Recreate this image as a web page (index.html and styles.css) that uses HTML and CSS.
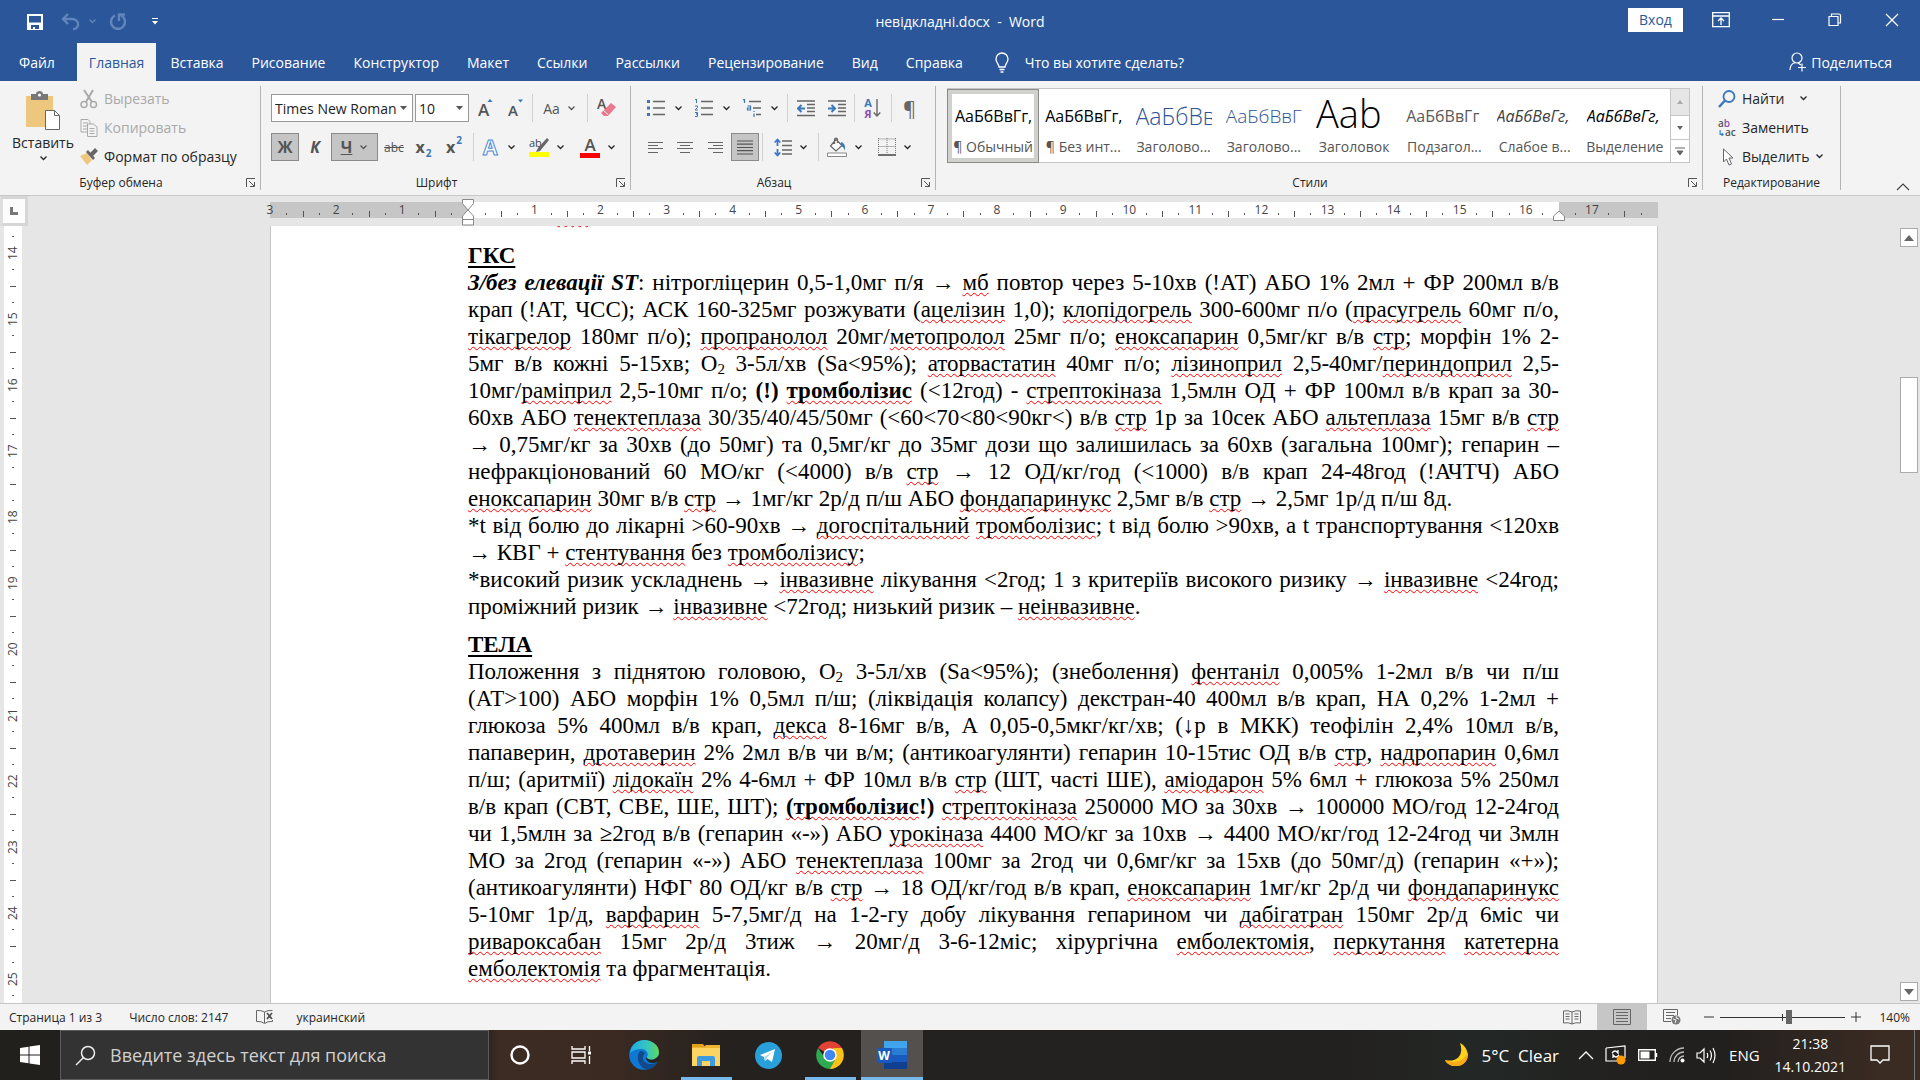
FILE: index.html
```html
<!DOCTYPE html>
<html lang="uk">
<head>
<meta charset="utf-8">
<title>невідкладні.docx - Word</title>
<link rel="stylesheet" href="styles.css">
</head>
<body>
<svg class="defs" aria-hidden="true">
  <symbol id="chev" viewBox="0 0 9 9"><path d="M1.5 2.5l3 3 3-3" fill="none" stroke="currentColor" stroke-width="1.3"/></symbol>
  <symbol id="launch" viewBox="0 0 10 10"><path d="M.5 9V.5H9M3 3l5 5M8.500 4v4.500H4" fill="none" stroke="#555"/></symbol>
</svg>

<header class="titlebar">
  <div class="quick">
    <button aria-label="Сохранить"><svg width="18" height="18" viewBox="0 0 18 18"><path d="M1 1h16v16H1z" fill="#fff"/><path d="M3 3h12v6.500H3zM5 12h8v4H9v-2H7v2H5z" fill="#2b579a"/></svg></button>
    <button class="faded undo" aria-label="Отменить"><svg width="20" height="18" viewBox="0 0 20 18"><path d="M7 1L2 6l5 5M2.500 6H11c8 0 8 10 1 10" fill="none" stroke="currentColor" stroke-width="2.400"/></svg><svg width="9" height="9"><use href="#chev"/></svg></button>
    <button class="faded" aria-label="Повторить"><svg width="18" height="18" viewBox="0 0 18 18"><path d="M6 2.500a7 7 0 1 0 6 0M10 8V1.500h6" fill="none" stroke="currentColor" stroke-width="2.400"/></svg></button>
    <button class="custom" aria-label="Настройка панели"><svg width="8" height="9" viewBox="0 0 8 9"><path d="M1 1.500h6" stroke="#fff"/><path d="M1 4h6L4 7.500z" fill="#fff"/></svg></button>
  </div>
  <div class="doc-title">невідкладні.docx&nbsp; -&nbsp; Word</div>
  <div class="window-btns">
    <button class="signin">Вход</button>
    <button aria-label="Параметры ленты"><svg width="18" height="16" viewBox="0 0 18 16"><path d="M.7.700h16.600v14H.7zM1 4h16M9 13V6.500M6 9l3-3 3 3" fill="none" stroke="#fff" stroke-width="1.300"/></svg></button>
    <button aria-label="Свернуть"><svg width="14" height="14" viewBox="0 0 14 14"><path d="M1 6.500h12" stroke="#fff" stroke-width="1.200"/></svg></button>
    <button aria-label="Развернуть"><svg width="14" height="14" viewBox="0 0 14 14"><path d="M1 3.500h9v9H1zM3.500 3V1H11q1.500 0 1.500 1.500V10H10.500" fill="none" stroke="#fff" stroke-width="1.200"/></svg></button>
    <button aria-label="Закрыть"><svg width="14" height="14" viewBox="0 0 14 14"><path d="M1 1l12 12M13 1L1 13" stroke="#fff" stroke-width="1.200"/></svg></button>
  </div>
</header>

<nav class="tabs">
  <button class="file">Файл</button><button class="active">Главная</button><button>Вставка</button><button>Рисование</button><button>Конструктор</button><button>Макет</button><button>Ссылки</button><button>Рассылки</button><button>Рецензирование</button><button>Вид</button><button>Справка</button>
  <button class="tellme"><svg width="14" height="21" viewBox="0 0 14 21"><path d="M4 15c0-3-3-4-3-8a6 6 0 0 1 12 0c0 4-3 5-3 8zM4.500 17.500h5M5.500 20h3" fill="none" stroke="#fff" stroke-width="1.300"/></svg>Что вы хотите сделать?</button>
  <button class="share"><svg width="18" height="20" viewBox="0 0 18 20"><circle cx="8" cy="6" r="5" fill="none" stroke="#fff" stroke-width="1.200"/><path d="M1 18c0-4 2-6.500 5-7.500M9 11l3 2M9 15.500h8M13 11.500v8" fill="none" stroke="#fff" stroke-width="1.200"/></svg>Поделиться</button>
</nav>

<section class="ribbon" aria-label="Лента">
  <div class="group clipboard">
    <div class="body">
      <button class="paste"><svg width="36" height="40" viewBox="0 0 36 40"><path d="M1 5h27v31H1z" fill="#eec77f"/><path d="M6 3h5c0-4 7-4 7 0h5v6H6z" fill="#777"/><circle cx="14.500" cy="4" r="1.500" fill="#fff"/><path d="M20.500 19.500h9l5 5v14h-14z" fill="#fff" stroke="#666"/><path d="M29.500 19.500v5h5" fill="none" stroke="#666"/></svg>Вставить<svg width="9" height="9"><use href="#chev"/></svg></button>
      <div class="stack">
        <button class="disabled"><svg width="18" height="20" viewBox="0 0 18 20"><path d="M4 1l8 12M13 1L6 13" stroke="#aaa" stroke-width="2"/><circle cx="4" cy="15.500" r="3" fill="none" stroke="#aaa" stroke-width="1.500"/><circle cx="13.500" cy="15.500" r="3" fill="none" stroke="#aaa" stroke-width="1.500"/></svg>Вырезать</button>
        <button class="disabled"><svg width="18" height="20" viewBox="0 0 18 20"><path d="M1 1.500h7l2 2V14H1zM3 5h5M3 8h5M3 11h5" fill="none" stroke="#aaa"/><path d="M7.500 6h6l3.500 3v9.500H7.500z" fill="#f3f3f3" stroke="#aaa"/><path d="M9.500 10.500h5M9.500 13h5M9.500 15.500h5" stroke="#aaa"/></svg>Копировать</button>
        <button><svg width="18" height="18" viewBox="0 0 18 18"><path d="M0 8l7-3 5 7-5 5z" fill="#eec77f"/><path d="M6 4l2-2 7 8-2 2zM10 5l5-5 3 3-5 5z" fill="#666"/></svg>Формат по образцу</button>
      </div>
    </div>
    <footer><span>Буфер обмена</span><button aria-label="Буфер обмена: параметры"><svg width="10" height="10"><use href="#launch"/></svg></button></footer>
  </div>

  <div class="group font">
    <div class="body rows">
      <div class="row font-a">
        <label class="combo"><select aria-label="Шрифт"><option>Times New Roman</option></select><svg width="7" height="4"><path d="M0 0h7L3.500 4z" fill="#555"/></svg></label>
        <label class="combo"><select aria-label="Размер шрифта"><option>10</option></select><svg width="7" height="4"><path d="M0 0h7L3.500 4z" fill="#555"/></svg></label>
        <button aria-label="Увеличить размер"><svg width="16" height="20" viewBox="0 0 16 20"><text class="ga" x="0" y="18" font-size="17">А</text><path d="M9.500 4L12 1l2.500 3z" fill="#3b78b8"/></svg></button>
        <button aria-label="Уменьшить размер"><svg width="16" height="20" viewBox="0 0 16 20"><text class="ga" x="0" y="18" font-size="15">А</text><path d="M10 1.500h5l-2.500 3z" fill="#3b78b8"/></svg></button>
        <i class="sep"></i>
        <button class="grey">Аа<svg width="9" height="9"><use href="#chev"/></svg></button>
        <i class="sep"></i>
        <button aria-label="Очистить формат"><svg width="20" height="20" viewBox="0 0 20 20"><text class="ga" x="0" y="11" font-size="14">А</text><path d="M14 5l5 4-8 9H7l-3-3z" fill="#e8798c"/><path d="M6.500 12.500l5 4.500" stroke="#f3f3f3"/></svg></button>
      </div>
      <div class="row font-b">
        <button class="pressed strong">Ж</button>
        <button class="strong ital">К</button>
        <button class="pressed strong"><u>Ч</u><svg width="9" height="9"><use href="#chev"/></svg></button>
        <button class="strike"><s>abc</s></button>
        <button class="strong">x<sub>2</sub></button>
        <button class="strong">x<sup>2</sup></button>
        <i class="sep"></i>
        <button aria-label="Эффекты"><svg width="20" height="20" viewBox="0 0 20 20"><text class="outline" x="3" y="18" font-size="21">А</text></svg><svg width="9" height="9"><use href="#chev"/></svg></button>
        <button aria-label="Цвет выделения"><span class="hl"><b>ab</b><svg width="20" height="20" viewBox="0 0 20 20"><path d="M18 1l2 2-9 11-4 1 2-4z" fill="#666"/><path d="M0 15h20v5H0z" fill="#ff0"/></svg></span><svg width="9" height="9"><use href="#chev"/></svg></button>
        <button aria-label="Цвет текста"><span class="fc">А</span><svg width="9" height="9"><use href="#chev"/></svg></button>
      </div>
    </div>
    <footer><span>Шрифт</span><button aria-label="Шрифт: параметры"><svg width="10" height="10"><use href="#launch"/></svg></button></footer>
  </div>

  <div class="group para">
    <div class="body rows">
      <div class="row para-a">
        <button aria-label="Маркеры"><svg width="18" height="18" viewBox="0 0 18 18"><path d="M0 1h3v3H0zM0 7.500h3v3H0zM0 14h3v3H0z" fill="#3b78b8"/><path d="M6 2.500h12M6 9h12M6 15.500h12" stroke="#666" stroke-width="1.300"/></svg><svg width="9" height="9"><use href="#chev"/></svg></button>
        <button aria-label="Нумерация"><svg width="18" height="18" viewBox="0 0 18 18"><path d="M0 1l1.500-1v4M0 7h2.500v1.500L0 11h3M0 13.500h2.500V15H1h1.500v2.500H0" fill="none" stroke="#3b78b8"/><path d="M6 2.500h12M6 9h12M6 15.500h12" stroke="#666" stroke-width="1.300"/></svg><svg width="9" height="9"><use href="#chev"/></svg></button>
        <button aria-label="Многоуровневый список"><svg width="18" height="18" viewBox="0 0 18 18"><path d="M0 1l1.500-1v4M4.500 7h3v4h-3V9h3M11 12v1M11 14.500V18" fill="none" stroke="#3b78b8" stroke-width="1.200"/><path d="M6 2.500h12M10 9h8M13 15.500h5" stroke="#666" stroke-width="1.300"/></svg><svg width="9" height="9"><use href="#chev"/></svg></button>
        <i class="sep"></i>
        <button aria-label="Уменьшить отступ"><svg width="18" height="17" viewBox="0 0 18 17"><path d="M0 1h18M10 4.500h8M10 8h8M10 11.500h8M0 15.500h18" stroke="#666" stroke-width="1.300"/><path d="M1 8.500h7M4.500 5L1 8.500 4.500 12" fill="none" stroke="#3b78b8" stroke-width="2"/></svg></button>
        <button aria-label="Увеличить отступ"><svg width="18" height="17" viewBox="0 0 18 17"><path d="M0 1h18M10 4.500h8M10 8h8M10 11.500h8M0 15.500h18" stroke="#666" stroke-width="1.300"/><path d="M0 8.500h7M3.500 5L7 8.500 3.500 12" fill="none" stroke="#3b78b8" stroke-width="2"/></svg></button>
        <i class="sep"></i>
        <button class="sort" aria-label="Сортировка"><span>А<br><em>Я</em></span><svg width="8" height="19" viewBox="0 0 8 19"><path d="M4 0v17M.7 13.500L4 17l3.300-3.500" fill="none" stroke="#666" stroke-width="1.400"/></svg></button>
        <i class="sep"></i>
        <button class="pil">¶</button>
      </div>
      <div class="row para-b">
        <button aria-label="По левому краю"><svg width="15" height="13" viewBox="0 0 15 13"><path d="M0 1.500h15M0 4.500h10M0 7.500h15M0 11.500h10" stroke="#666" stroke-width="1.200"/></svg></button>
        <button aria-label="По центру"><svg width="16" height="13" viewBox="0 0 16 13"><path d="M0 1.500h16M3 4.500h10M0 7.500h16M3 11.500h10" stroke="#666" stroke-width="1.200"/></svg></button>
        <button aria-label="По правому краю"><svg width="15" height="13" viewBox="0 0 15 13"><path d="M0 1.500h15M5 4.500h10M0 7.500h15M5 11.500h10" stroke="#666" stroke-width="1.200"/></svg></button>
        <button class="pressed" aria-label="По ширине"><svg width="16" height="15" viewBox="0 0 16 15"><path d="M0 1h16M0 4.200h16M0 7.500h16M0 10.700h16M0 14h16" stroke="#555" stroke-width="1.200"/></svg></button>
        <i class="sep"></i>
        <button aria-label="Интервал"><svg width="18" height="19" viewBox="0 0 18 19"><path d="M3.500 2v6M3.500 11v6M.7 4.500l2.800-3 2.800 3M.7 14.500l2.800 3 2.800-3" fill="none" stroke="#3b78c8" stroke-width="1.800"/><path d="M8 3h10M8 7.500h10M8 12h10M8 16h10" stroke="#666" stroke-width="1.300"/></svg><svg width="9" height="9"><use href="#chev"/></svg></button>
        <i class="sep"></i>
        <button aria-label="Заливка"><svg width="20" height="20" viewBox="0 0 20 20"><path d="M9 2.500L3.500 9 9 14l6-5.500zM7.500 7V2q1.500-2 3 0v4" fill="#fff" stroke="#666" stroke-width="1.200"/><path d="M14 5q5 1 4 9-1-4-4-5z" fill="#3b78b8"/><path d="M.5 16h19v3.500H.5z" fill="#fff" stroke="#888"/></svg><svg width="9" height="9"><use href="#chev"/></svg></button>
        <button aria-label="Границы"><svg width="18" height="18" viewBox="0 0 18 18"><path d="M.5 1h17M.5 0v16M17.500 0v16M9 0v16M.5 8.500h17" fill="none" stroke="#777" stroke-dasharray="1 1"/><path d="M0 17h18" stroke="#444" stroke-width="1.500"/></svg><svg width="9" height="9"><use href="#chev"/></svg></button>
      </div>
    </div>
    <footer><span>Абзац</span><button aria-label="Абзац: параметры"><svg width="10" height="10"><use href="#launch"/></svg></button></footer>
  </div>

  <div class="group styles">
    <div class="body">
      <div class="gallery">
        <button class="selected"><span>АаБбВвГг,</span><small>¶ Обычный</small></button>
        <button><span>АаБбВвГг,</span><small>¶ Без инт...</small></button>
        <button><span class="h1">АаБбВвГ</span><small>Заголово...</small></button>
        <button><span class="h2">АаБбВвГг</span><small>Заголово...</small></button>
        <button><span class="ttl">Ааb</span><small>Заголовок</small></button>
        <button><span class="subt">АаБбВвГг</span><small>Подзагол...</small></button>
        <button><span class="weak">АаБбВвГг,</span><small>Слабое в...</small></button>
        <button><span class="emph">АаБбВвГг,</span><small>Выделение</small></button>
        <div class="spin">
          <button aria-label="Вверх" disabled><svg width="6" height="4"><path d="M0 4h6L3 0z" fill="#aaa"/></svg></button>
          <button aria-label="Вниз"><svg width="6" height="4"><path d="M0 0h6L3 4z" fill="#666"/></svg></button>
          <button aria-label="Все стили"><svg width="10" height="9"><path d="M0 1h10M2 4h6L5 8z" fill="#666" stroke="#666" stroke-width="1"/></svg></button>
        </div>
      </div>
    </div>
    <footer><span>Стили</span><button aria-label="Стили: параметры"><svg width="10" height="10"><use href="#launch"/></svg></button></footer>
  </div>

  <div class="group edit">
    <div class="body">
      <div class="stack">
        <button><svg width="18" height="18" viewBox="0 0 18 18"><circle cx="11" cy="6.500" r="5.500" fill="none" stroke="#3b78b8" stroke-width="1.800"/><path d="M7 10.500L1 17" stroke="#3b78b8" stroke-width="2.500"/></svg>Найти<svg class="far" width="9" height="9"><use href="#chev"/></svg></button>
        <button><span class="abac"><b>a<em>b</em></b><b><i>↳</i>ac</b></span>Заменить</button>
        <button><svg width="18" height="18" viewBox="0 0 18 18"><path d="M5.500 1v13l3-3 2.500 6 2.500-1-2.500-6h4z" fill="#fff" stroke="#666"/></svg>Выделить<svg class="near" width="9" height="9"><use href="#chev"/></svg></button>
      </div>
    </div>
    <footer><span>Редактирование</span></footer>
  </div>
  <button class="collapse" aria-label="Свернуть ленту"><svg width="14" height="8" viewBox="0 0 14 8"><path d="M1 7l6-6 6 6" fill="none" stroke="#444" stroke-width="1.200"/></svg></button>
</section>

<main class="work">
  <div class="corner"><span></span></div>
  <div class="hruler-row">
    <div class="hruler">
      <div><b>3</b></div><div><b>2</b></div><div><b>1</b></div><div><b><svg width="12" height="27" viewBox="0 0 12 27"><path d="M.5.500h11v4L6 11l5.500 6v9H.5v-9L6 11 .5 4.500zM.5 20.500h11" fill="#fff" stroke="#888"/></svg></b></div><div><b>1</b></div><div><b>2</b></div><div><b>3</b></div><div><b>4</b></div><div><b>5</b></div><div><b>6</b></div><div><b>7</b></div><div><b>8</b></div><div><b>9</b></div><div><b>10</b></div><div><b>11</b></div><div><b>12</b></div><div><b>13</b></div><div><b>14</b></div><div><b>15</b></div><div class="indent-end"><b>16</b><svg width="12" height="11" viewBox="0 0 12 11"><path d="M6 1l5.500 5v4.500H.5V6z" fill="#fff" stroke="#888"/></svg></div><div><b>17</b></div>
    </div>
  </div>
  <div class="vruler"><div class="vcells">
    <div></div><div><b>14</b></div><div><b>15</b></div><div><b>16</b></div><div><b>17</b></div><div><b>18</b></div><div><b>19</b></div><div><b>20</b></div><div><b>21</b></div><div><b>22</b></div><div><b>23</b></div><div><b>24</b></div><div><b>25</b></div>
  </div></div>
  <div class="canvas">
    <article class="page">
      <div class="prev"><u>стр</u><span>,</span><span>,</span><span>р</span><span>р</span></div>
      <h2>ГКС</h2>
      <p>
        <span><b><i>З/без елевації ST</i></b>: нітрогліцерин 0,5-1,0мг п/я → <u>мб</u> повтор через 5-10хв (!АТ) АБО 1% 2мл + ФР 200мл в/в</span>
        <span>крап (!АТ, ЧСС); АСК 160-325мг розжувати (<u>ацелізин</u> 1,0); <u>клопідогрель</u> 300-600мг п/о (<u>прасугрель</u> 60мг п/о,</span>
        <span><u>тікагрелор</u> 180мг п/о); <u>пропранолол</u> 20мг/<u>метопролол</u> 25мг п/о; <u>еноксапарин</u> 0,5мг/кг в/в <u>стр</u>; морфін 1% 2-</span>
        <span>5мг в/в кожні 5-15хв; О<sub>2</sub> 3-5л/хв (Sa&lt;95%); <u>аторвастатин</u> 40мг п/о; <u>лізиноприл</u> 2,5-40мг/<u>периндоприл</u> 2,5-</span>
        <span>10мг/<u>раміприл</u> 2,5-10мг п/о; <b>(!) <u>тромболізис</u></b> (&lt;12год) - <u>стрептокіназа</u> 1,5млн ОД + ФР 100мл в/в крап за 30-</span>
        <span>60хв АБО <u>тенектеплаза</u> 30/35/40/45/50мг (&lt;60&lt;70&lt;80&lt;90кг&lt;) в/в <u>стр</u> 1р за 10сек АБО <u>альтеплаза</u> 15мг в/в <u>стр</u></span>
        <span>→ 0,75мг/кг за 30хв (до 50мг) та 0,5мг/кг до 35мг дози що залишилась за 60хв (загальна 100мг); гепарин –</span>
        <span>нефракціонований 60 МО/кг (&lt;4000) в/в <u>стр</u> → 12 ОД/кг/год (&lt;1000) в/в крап 24-48год (!АЧТЧ) АБО</span>
        <span class="end"><u>еноксапарин</u> 30мг в/в <u>стр</u> → 1мг/кг 2р/д п/ш АБО <u>фондапаринукс</u> 2,5мг в/в <u>стр</u> → 2,5мг 1р/д п/ш 8д.</span>
      </p>
      <p>
        <span>*t від болю до лікарні &gt;60-90хв → <u>догоспітальний</u> <u>тромболізис</u>; t від болю &gt;90хв, а t транспортування &lt;120хв</span>
        <span class="end">→ КВГ + <u>стентування</u> без <u>тромболізису</u>;</span>
      </p>
      <p>
        <span>*високий ризик ускладнень → <u>інвазивне</u> лікування &lt;2год; 1 з критеріїв високого ризику → <u>інвазивне</u> &lt;24год;</span>
        <span class="end">проміжний ризик → <u>інвазивне</u> &lt;72год; низький ризик – <u>неінвазивне</u>.</span>
      </p>
      <h2>ТЕЛА</h2>
      <p>
        <span>Положення з піднятою головою, О<sub>2</sub> 3-5л/хв (Sa&lt;95%); (знеболення) <u>фентаніл</u> 0,005% 1-2мл в/в чи п/ш</span>
        <span>(АТ&gt;100) АБО морфін 1% 0,5мл п/ш; (ліквідація колапсу) декстран-40 400мл в/в крап, НА 0,2% 1-2мл +</span>
        <span>глюкоза 5% 400мл в/в крап, <u>декса</u> 8-16мг в/в, А 0,05-0,5мкг/кг/хв; (↓р в МКК) теофілін 2,4% 10мл в/в,</span>
        <span>папаверин, <u>дротаверин</u> 2% 2мл в/в чи в/м; (антикоагулянти) гепарин 10-15тис ОД в/в <u>стр</u>, <u>надропарин</u> 0,6мл</span>
        <span>п/ш; (аритмії) <u>лідокаїн</u> 2% 4-6мл + ФР 10мл в/в <u>стр</u> (ШТ, часті ШЕ), <u>аміодарон</u> 5% 6мл + глюкоза 5% 250мл</span>
        <span>в/в крап (СВТ, СВЕ, ШЕ, ШТ); <b><u>(тромболізис</u>!)</b> <u>стрептокіназа</u> 250000 МО за 30хв → 100000 МО/год 12-24год</span>
        <span>чи 1,5млн за ≥2год в/в (гепарин «-») АБО <u>урокіназа</u> 4400 МО/кг за 10хв → 4400 МО/кг/год 12-24год чи 3млн</span>
        <span>МО за 2год (гепарин «-») АБО <u>тенектеплаза</u> 100мг за 2год чи 0,6мг/кг за 15хв (до 50мг/д) (гепарин «+»);</span>
        <span>(антикоагулянти) НФГ 80 ОД/кг в/в <u>стр</u> → 18 ОД/кг/год в/в крап, <u>еноксапарин</u> 1мг/кг 2р/д чи <u>фондапаринукс</u></span>
        <span>5-10мг 1р/д, <u>варфарин</u> 5-7,5мг/д на 1-2-гу добу лікування гепарином чи <u>дабігатран</u> 150мг 2р/д 6міс чи</span>
        <span><u>ривароксабан</u> 15мг 2р/д 3тиж → 20мг/д 3-6-12міс; хірургічна <u>емболектомія</u>, <u>перкутання</u> <u>катетерна</u></span>
        <span class="end"><u>емболектомія</u> та фрагментація.</span>
      </p>
    </article>
  </div>
  <div class="scroll">
    <button aria-label="Прокрутить вверх"><svg width="10" height="6"><path d="M0 6h10L5 0z" fill="#666"/></svg></button>
    <div class="track"><div class="thumb"></div></div>
    <button aria-label="Прокрутить вниз"><svg width="10" height="6"><path d="M0 0h10L5 6z" fill="#666"/></svg></button>
  </div>
</main>

<footer class="status">
  <span class="pages">Страница 1 из 3</span><span class="words">Число слов: 2147</span>
  <svg class="proof" width="18" height="16" viewBox="0 0 18 16"><path d="M8.500 14V3Q5 1 .5 1.500v11q5-.5 8 2 3-2.500 8-2V11M8.500 3q3-2 8-1.500" fill="none" stroke="#666"/><path d="M11 4l5 6M16 4l-5 6" stroke="#555" stroke-width="1.800"/></svg>
  <span>украинский</span>
  <div class="views">
    <button aria-label="Режим чтения"><svg width="18" height="15" viewBox="0 0 18 15"><path d="M9 14V2Q5 0 .5 1v12q5-1 8.500 1 3.500-2 8.500-1V1Q13 0 9 2M2.500 4h4M2.500 6.500h4M2.500 9h4M11.500 4h4M11.500 6.500h4M11.500 9h4" fill="none" stroke="#666"/></svg></button>
    <button class="on" aria-label="Разметка страницы"><svg width="18" height="16" viewBox="0 0 18 16"><path d="M.5.500h17v15H.5zM3 3.500h12M3 6.500h12M3 9.500h12M3 12.500h12" fill="none" stroke="#666"/></svg></button>
    <button aria-label="Веб-документ"><svg width="18" height="16" viewBox="0 0 18 16"><path d="M8 12.500H.5V.5h14v6M3 3.500h9M3 6.500h8M3 9.500h5" fill="none" stroke="#666"/><circle cx="13" cy="11" r="4.500" fill="#777"/><path d="M10 10l3 1-1 3M14 7l-1 2 3 1" stroke="#f3f3f3" fill="none"/></svg></button>
  </div>
  <div class="zoom">
    <button aria-label="Уменьшить"><svg width="10" height="10"><path d="M0 5h10" stroke="#333"/></svg></button>
    <input type="range" min="10" max="272" value="156" aria-label="Масштаб">
    <button aria-label="Увеличить"><svg width="10" height="10"><path d="M0 5h10M5 0v10" stroke="#333"/></svg></button>
    <button class="pct">140%</button>
  </div>
</footer>

<div class="taskbar">
  <button class="start" aria-label="Пуск"><svg width="20" height="20" viewBox="0 0 20 20"><path d="M0 3l8.500-1.300v7.800H0zM9.500 1.500L20 0v9.500H9.500zM0 10.500h8.500v7.800L0 17zM9.500 10.500H20V20L9.500 18.500z" fill="#fff"/></svg></button>
  <label class="search"><svg width="21" height="21" viewBox="0 0 21 21"><circle cx="13" cy="8" r="6.500" fill="none" stroke="#eee" stroke-width="1.500"/><path d="M8.500 12.500L1 20" stroke="#eee" stroke-width="1.500"/></svg><input type="text" placeholder="Введите здесь текст для поиска" aria-label="Поиск"></label>
  <div class="apps">
    <button aria-label="Кортана"><svg width="20" height="20"><circle cx="10" cy="10" r="8.500" fill="none" stroke="#fff" stroke-width="2.400"/></svg></button>
    <button aria-label="Представление задач"><svg width="22" height="20" viewBox="0 0 22 20"><path d="M1 1v3h13V1M1 19v-3h13v3M1 7h13v6H1zM18.500 1v5M18.500 11v8" fill="none" stroke="#fff" stroke-width="1.300"/><path d="M17 6.500h3v3h-3z" fill="#fff"/></svg></button>
    <button aria-label="Edge"><svg width="30" height="30" viewBox="0 0 30 30"><defs><linearGradient id="eg"><stop offset="0" stop-color="#1fa9e6"/><stop offset=".6" stop-color="#36c6c0"/><stop offset="1" stop-color="#62d957"/></linearGradient></defs><circle cx="15" cy="15" r="14.800" fill="#0e78d4"/><path d="M1 13C2 5 8 0 15 0c9 0 15 6 15 12 0 6-5 8-9 8-3 0-4-2-3-3 2-3 0-8-6-8-5 0-9 2-11 4z" fill="url(#eg)"/><path d="M11 11c-5 6-1 17 7 18.500C24 29 28 25 28.500 22c-4 3-13 3-14.500-3-.5-3 1-5 2-5.500-1-2-3-2.500-5-2.500z" fill="#114a8b"/><path d="M17 17c0 5 5 7.500 11 5l2-3v-4c-3 5-9 6-12 3z" fill="#25221f"/></svg></button>
    <button class="open" aria-label="Проводник"><svg width="28" height="24" viewBox="0 0 28 24"><path d="M0 1h11l3 4H0z" fill="#e0a21a"/><path d="M0 4h28v19H0z" fill="#fbd461"/><path d="M0 4h12l2-2h14v3H0z" fill="#efb52e"/><path d="M5 23v-8q0-2 2-2h14q2 0 2 2v8h-5v-5h-8v5z" fill="#3e9be0"/></svg></button>
    <button aria-label="Telegram"><svg width="27" height="27" viewBox="0 0 27 27"><circle cx="13.500" cy="13.500" r="13.500" fill="#29a0da"/><path d="M5 13l15-6-3 13-4.500-3-2.500 2-1-4z" fill="#fff"/><path d="M9 15l8-5-5.500 6.500L10 19z" fill="#b5d8ee"/></svg></button>
    <button class="open" aria-label="Chrome"><svg width="28" height="28" viewBox="0 0 28 28"><path d="M14 14L2 7A14 14 0 0 1 26 7z" fill="#e34133"/><path d="M14 14h13A14 14 0 0 1 14 28l-1-1z" fill="#fbc116"/><path d="M26 7a14 14 0 0 1-12 21l6-12-3-9z" fill="#fbc116"/><path d="M2 7a14 14 0 0 0 12 21l5-9-10-2z" fill="#2da94f"/><circle cx="14" cy="14" r="6.800" fill="#fff"/><circle cx="14" cy="14" r="5.300" fill="#4285f4"/></svg></button>
    <button class="open current" aria-label="Word"><svg width="30" height="28" viewBox="0 0 30 28"><path d="M7 0h23v7H7z" fill="#41a5ee"/><path d="M7 7h23v7H7z" fill="#2b7cd3"/><path d="M7 14h23v7H7z" fill="#185abd"/><path d="M7 21h23v7H7z" fill="#103f91"/><path d="M0 7h15v15H0z" fill="#185abd"/><text class="wlogo" x="7" y="19" font-size="12" text-anchor="middle">W</text></svg></button>
  </div>
  <div class="tray">
    <button class="weather"><svg width="24" height="24" viewBox="0 0 24 24"><path d="M15 0c12 6 9 23-4 23-5 0-9-2-11-6 13 3 19-6 15-17z" fill="#ffd21a"/><path d="M23 9c1 8-4 14-12 14-5 0-9-2-11-6 9 4 19 2 23-8z" fill="#fca91a"/></svg>5°C&nbsp; Clear</button>
    <button aria-label="Скрытые значки"><svg width="16" height="9" viewBox="0 0 16 9"><path d="M1 8l7-7 7 7" fill="none" stroke="#fff" stroke-width="1.300"/></svg></button>
    <button aria-label="Обновления"><svg width="22" height="20" viewBox="0 0 22 20"><path d="M1 3l19-2v12M1 3v13h12" fill="none" stroke="#fff" stroke-width="1.200"/><path d="M7 8q3-4 6 0V5M14 10q-3 4-6 0v3" fill="none" stroke="#fff" stroke-width="1.300"/><circle cx="16" cy="15" r="4.500" fill="#ff9a00"/></svg></button>
    <button aria-label="Батарея"><svg width="20" height="12" viewBox="0 0 20 12"><path d="M.7.700h16.600v10.600H.7zM18.500 4v4" fill="none" stroke="#fff" stroke-width="1.400"/><path d="M2.500 2.500h9v7h-9z" fill="#fff"/></svg></button>
    <button aria-label="Сеть"><svg width="16" height="16" viewBox="0 0 16 16"><path d="M1 15A14 14 0 0 1 15 1M5 15A10 10 0 0 1 15 5M9 15a6 6 0 0 1 6-6" fill="none" stroke="#bbb" stroke-width="1.300"/><circle cx="13.500" cy="13.500" r="2" fill="#fff"/></svg></button>
    <button aria-label="Громкость"><svg width="20" height="17" viewBox="0 0 20 17"><path d="M1 6h3l4-4v13l-4-4H1zM11 6q1.500 2.500 0 5M14 3.500q3 5 0 10M17 1q4 7.500 0 15" fill="none" stroke="#fff" stroke-width="1.200"/></svg></button>
    <button class="lang">ENG</button>
    <button class="clock">21:38<br>14.10.2021</button>
    <button class="note" aria-label="Уведомления"><svg width="20" height="20" viewBox="0 0 20 20"><path d="M1 1h18v14h-6l-3 3-3-3H1z" fill="none" stroke="#fff" stroke-width="1.300"/></svg></button>
  </div>
</div>
</body>
</html>
```
FILE: styles.css
```css
* { box-sizing: border-box; }
body {
  margin: 0;
  height: 100vh;
  display: flex;
  flex-direction: column;
  overflow: hidden;
  font-family: "Open Sans", "Noto Sans", sans-serif;
  font-size: 14px;
  color: #262626;
}
button {
  font: inherit;
  color: inherit;
  background: none;
  border: 0;
  padding: 0;
  display: flex;
  align-items: center;
  justify-content: center;
  white-space: nowrap;
}
svg { flex: none; display: block; }
.defs { position: absolute; width: 0; height: 0; }
.ga { fill: #555; font-weight: 600; }
.outline { fill: #fff; stroke: #4a8ad4; stroke-width: 1px; font-weight: 700; }
.wlogo { fill: #fff; font-weight: 700; }

/* title bar */
.titlebar {
  display: grid;
  grid-template-columns: 1fr auto 1fr;
  align-items: center;
  height: 43px;
  flex: none;
  background: #2b579a;
  color: #fff;
}
.quick { display: flex; align-items: center; padding-left: 26px; gap: 12px; }
.quick .undo { gap: 7px; margin-left: 5px; }
.quick .custom { margin-left: 12px; }
.faded { color: #6285bb; }
.window-btns { display: flex; justify-content: flex-end; align-items: center; padding-bottom: 4px; }
.window-btns button { width: 57px; height: 24px; }
.window-btns .signin { width: 55px; margin-right: 9px; background: #fff; color: #2b579a; }

/* tabs */
.tabs {
  display: flex;
  height: 38px;
  flex: none;
  background: #2b579a;
  color: #fff;
}
.tabs button { padding: 0 14px; }
.tabs .file { padding: 0 22px 0 19px; }
.tabs .active { background: #f3f3f3; color: #2b579a; padding: 0 12px; }
.tabs .tellme { gap: 16px; padding-left: 18px; }
.tabs .share { margin-left: auto; gap: 4px; padding-right: 28px; }

/* ribbon */
.ribbon {
  display: flex;
  height: 115px;
  flex: none;
  background: #f3f3f3;
  border-bottom: 1px solid #c8c8c8;
  padding-top: 5px;
}
.group {
  display: flex;
  flex-direction: column;
  height: 104px;
  border-right: 1px solid #b4b4b4;
}
.group .body { flex: 1; display: flex; min-height: 0; }
.group footer {
  display: grid;
  grid-template-columns: 1fr 18px;
  height: 14px;
  align-items: center;
  text-align: center;
  font-size: 12px;
  line-height: 14px;
  padding-bottom: 2px;
}
.clipboard { width: 261px; }
.font { width: 370px; }
.para { width: 305px; }
.styles { width: 767px; }
.edit { width: 138px; }
.edit footer { grid-template-columns: 1fr; }
.paste { width: 62px; margin-left: 12px; height: 80px; flex-direction: column; margin-top: 1px; gap: 2px; }
.stack { display: flex; flex-direction: column; padding-left: 6px; margin-top: -2px; }
.stack button { height: 29px; gap: 6px; justify-content: flex-start; }
.edit .stack { padding-left: 15px; }
.stack .far { margin-left: 8px; }
.disabled { color: #a9a9a9; }
.group .rows { flex-direction: column; padding: 8px 0 0 10px; gap: 11px; }
.row { display: grid; height: 28px; }
.row button { gap: 7px; }
.font-a { grid-template-columns: 144px 56px 30px 29px 4px 51px 4px 36px; }
.font-b { grid-template-columns: 28px 32px 47px 32px 27px 34px 4px 46px 52px 50px; }
.para-a { grid-template-columns: 47px 49px 48px 4px 33px 30px 4px 33px 4px 33px; }
.para-b { grid-template-columns: 28px 31px 31px 28px 7px 50px 4px 50px 50px; }
.para-a button { gap: 9px; }
.sep { width: 1px; height: 28px; justify-self: center; background: #d0d0d0; }
.combo {
  display: flex;
  align-items: center;
  margin-right: 2px;
  padding: 0 5px 0 3px;
  background: #fff;
  border: 1px solid #999;
}
.combo select {
  appearance: none;
  flex: 1;
  min-width: 0;
  width: 0;
  border: 0;
  padding: 0;
  background: none;
  font: inherit;
  color: #222;
  text-overflow: clip;
}
.grey { color: #555; }
.pressed { background: #c5c5c5; outline: 1px solid #8a8a8a; outline-offset: -1px; }
.strong { font-weight: 700; font-size: 16px; color: #555; }
.row .strong { line-height: 20px; }
.font-b .strong:nth-child(n+5) { gap: 1px; }
.ital { font-style: italic; }
.strong sub, .strong sup { font-size: 10px; line-height: 10px; color: #3b78b8; }
.strong sub { align-self: flex-end; padding-bottom: 3px; }
.strong sup { align-self: flex-start; padding-top: 2px; }
.strike { font-size: 12px; color: #555; }
.hl { display: grid; width: 20px; }
.hl b, .hl svg { grid-area: 1 / 1; }
.hl b { font-size: 11px; line-height: 12px; font-weight: 400; text-align: left; color: #444; }
.fc { width: 20px; height: 22px; border-bottom: 5px solid #f00; font-weight: 600; font-size: 17px; line-height: 17px; color: #555; }
.sort span { font-size: 11px; line-height: 11px; font-weight: 700; color: #3b78b8; }
.sort em { font-style: normal; color: #8a4fb0; }
.para-a .sort { gap: 1px; }
.pil { font-size: 20px; color: #666; }

.styles .body { padding: 2px 12px 0 11px; }
.gallery {
  display: grid;
  grid-template-columns: repeat(8, 1fr) 19px;
  width: 100%;
  height: 75px;
  background: #fff;
  border: 1px solid #c6c6c6;
}
.gallery > button {
  flex-direction: column;
  min-width: 0;
  padding: 0 7px;
  margin: 1px 0;
}
.gallery > .selected { border: 4px solid #d0d0cd; outline: 1px solid #8a8a8a; padding: 0 3px; }
.gallery span { width: 100%; height: 42px; line-height: 44px; overflow: hidden; color: #000; text-align: left; font-size: 16px; }
.gallery small { font-size: 14px; line-height: 22px; color: #555; }
.gallery .h1 { color: #2f5496; font-size: 23px; font-weight: 300; }
.gallery .h2 { color: #2f5496; font-size: 19px; font-weight: 300; }
.gallery .ttl { font-size: 38px; line-height: 38px; font-weight: 300; }
.gallery .subt { color: #5a5a5a; }
.gallery .weak { color: #404040; font-style: italic; }
.gallery .emph { font-style: italic; }
.spin { display: grid; grid-template-rows: 26px 24px 1fr; border-left: 1px solid #c6c6c6; }
.spin button + button { border-top: 1px solid #c6c6c6; }
.spin button:disabled { background: #e6e6e6; }
.abac { width: 18px; font-size: 10px; line-height: 9px; color: #555; }
.abac b { display: block; text-align: left; white-space: nowrap; font-weight: 600; }
.abac em { font-style: normal; color: #8a4fb0; }
.abac i { font-style: normal; color: #3b78b8; font-size: 8px; }
.collapse { margin: auto 10px 4px auto; }

/* work area */
.work {
  flex: 1;
  min-height: 0;
  display: grid;
  grid-template-columns: 28px 1fr 20px;
  grid-template-rows: 30px 1fr;
  background: #e6e6e6;
}
.corner { border: 3px solid #d6d6d6; border-left-color: #dedede; background: #fcfcfc; display: grid; place-items: center; }
.corner span { width: 8px; height: 8px; border: solid #777; border-width: 0 0 3px 3px; }
.hruler-row { grid-column: 2 / 4; padding: 6px 20px 0 0; }
.hruler {
  display: grid;
  grid-template-columns: repeat(21, 1fr);
  width: 1388px;
  height: 16px;
  margin: 0 auto;
  background: linear-gradient(90deg, #c6c6c6 14.2%, #fff 14.2%, #fff 92.9%, #c6c6c6 92.9%);
}
.hruler > div {
  display: flex;
  background:
    linear-gradient(#555, #555) 25% 50% / 1px 2px no-repeat,
    linear-gradient(#555, #555) 50% 50% / 1px 6px no-repeat,
    linear-gradient(#555, #555) 75% 50% / 1px 2px no-repeat;
}
.hruler b { width: 0; display: flex; justify-content: center; font-size: 12px; line-height: 16px; font-weight: 400; color: #444; }
.hruler b svg { margin-top: -3px; }
.indent-end svg { margin: 8px 0 0 27px; }
.vruler { margin: 0 6px 0 4px; background: #fff; overflow: hidden; }
.vcells { margin-top: -39px; }
.vcells > div {
  height: 66px;
  display: flex;
  justify-content: center;
  background:
    linear-gradient(#555, #555) 50% 25% / 2px 1px no-repeat,
    linear-gradient(#555, #555) 50% 50% / 6px 1px no-repeat,
    linear-gradient(#555, #555) 50% 75% / 2px 1px no-repeat;
}
.vcells b {
  height: 16px;
  margin-top: -8px;
  writing-mode: vertical-rl;
  transform: rotate(180deg);
  font-size: 12px;
  line-height: 18px;
  font-weight: 400;
  text-align: center;
  color: #444;
}
.canvas { overflow: hidden; }
.page {
  display: flow-root;
  width: 1388px;
  min-height: 100%;
  margin: 0 auto;
  padding: 0 98px 0 197px;
  background: #fff;
  border: solid #c6c6c6;
  border-width: 0 1px;
  font-family: "Liberation Serif", serif;
  font-size: 23px;
  line-height: 27px;
  color: #000;
}
.prev { display: grid; grid-template-columns: 138px 49px 170px 76px 1fr; margin: -26px 0 0; padding-left: 89px; }
.page h2 {
  margin: 15px 0 0;
  font-size: 23px;
  line-height: 27px;
  text-decoration: underline 2px;
  text-underline-offset: 3px;
  text-decoration-skip-ink: none;
}
.page p { margin: 0; }
.page p + h2 { margin-top: 11px; }
.page p > span { display: block; white-space: nowrap; text-align-last: justify; }
.page p > .end { text-align-last: left; }
.page u {
  text-decoration: underline wavy #f00 1px;
  text-underline-offset: 2px;
  text-decoration-skip-ink: none;
}
.page sub { font-size: 15px; line-height: 0; vertical-align: -3px; }
.scroll { display: flex; flex-direction: column; padding: 2px 2px 2px 0; }
.scroll button { height: 19px; background: #fff; border: 1px solid #ababab; }
.track { flex: 1; padding-top: 130px; }
.thumb { height: 96px; background: #fff; border: 1px solid #ababab; }

/* status bar */
.status {
  display: flex;
  align-items: center;
  height: 27px;
  flex: none;
  padding: 0 10px 0 9px;
  background: #f3f3f3;
  border-top: 1px solid #c6c6c6;
  font-size: 12px;
}
.words { margin-left: 27px; }
.proof { margin: 0 22px 0 28px; }
.views { display: flex; align-self: stretch; margin-left: auto; }
.views button { width: 50px; }
.views .on { background: #c6c6c6; }
.zoom { display: flex; align-items: center; gap: 6px; padding-left: 7px; }
.zoom .pct { width: 34px; margin-left: 9px; justify-content: flex-end; }
.zoom input {
  appearance: none;
  width: 125px;
  height: 14px;
  margin: 0;
  background:
    linear-gradient(#333, #333) 50% 50% / 1px 7px no-repeat,
    linear-gradient(#333, #333) 50% 50% / 100% 1px no-repeat;
}
.zoom input::-webkit-slider-thumb { appearance: none; width: 6px; height: 14px; background: #666; }

/* taskbar */
.taskbar {
  display: flex;
  height: 50px;
  flex: none;
  color: #fff;
  background: linear-gradient(90deg, #22201c 0, #22201c 25%, #3d2c23 26%, #3a2a22 32%, #24211f 38%, #23211f 70%, #232826 77%, #22211f 84%, #22201e 90%, #3a2b23 98%);
}
.start { width: 60px; }
.search {
  display: flex;
  align-items: center;
  gap: 14px;
  width: 429px;
  padding-left: 14px;
  background: #333;
  border: 1px solid #5c5c5c;
}
.search input { flex: 1; border: 0; padding: 0; background: none; font: inherit; font-size: 18px; color: #fff; }
.search input::placeholder { color: #d0d0d0; opacity: 1; }
.apps { display: flex; }
.apps button { width: 62px; }
.apps .open { background: linear-gradient(#76b9ed, #76b9ed) 50% 100% / 51px 3px no-repeat; }
.apps .current { background: linear-gradient(#76b9ed, #76b9ed) 50% 100% / 62px 3px no-repeat, #54504e; }
.tray { display: flex; margin-left: auto; gap: 11px; border-right: 1px solid #777; margin-right: 5px; padding-right: 24px; }
.weather { gap: 13px; font-size: 17px; margin-right: 8px; }
.lang { font-size: 15px; margin-left: 2px; }
.clock { font-size: 14px; line-height: 23px; text-align: center; margin-left: 4px; }
.note { margin-left: 13px; }
```
